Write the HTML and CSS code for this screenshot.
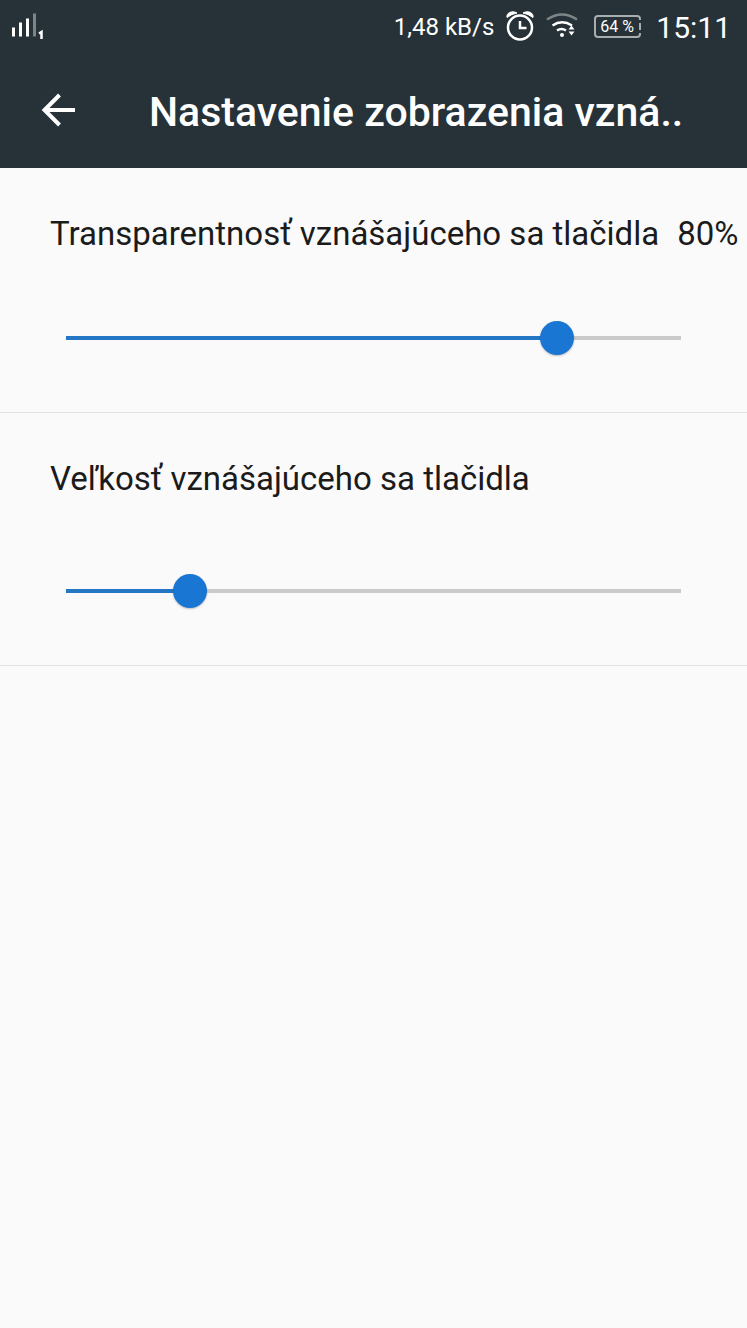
FILE: index.html
```html
<!DOCTYPE html>
<html lang="sk">
<head>
<meta charset="utf-8">
<meta name="viewport" content="width=device-width, initial-scale=1">
<title>Nastavenie zobrazenia</title>
<link rel="stylesheet" href="styles.css">
</head>
<body>
<header class="header">
  <div class="status">
    <svg class="signal" width="36" height="28" viewBox="0 0 36 28" aria-hidden="true">
      <g stroke="#fff" stroke-width="3" fill="none">
        <path d="M3.500 14.500v9M10.500 9.500v14M17.500 5.500v18"/>
        <path d="M24.500 0.500v23" stroke="#7d8587"/>
        <path d="M29 20.500l2.500-1.500v7" stroke-width="2.500"/>
      </g>
    </svg>
    <span class="speed">1,48 kB/s</span>
    <svg class="icon" width="28" height="32" viewBox="0 0 28 32" aria-hidden="true">
      <circle cx="14" cy="17.500" r="12" fill="none" stroke="#fff" stroke-width="2.500"/>
      <path d="M1 7.500C0 3 6 0 11 3Q5.500 4 1 7.500ZM27 7.500C28 3 22 0 17 3Q22.500 4 27 7.500Z" fill="#fff" stroke="#fff"/>
      <path d="M14 11v7h6.500" fill="none" stroke="#fff" stroke-width="2.500"/>
    </svg>
    <svg class="icon" width="32" height="26" viewBox="0 0 32 26" aria-hidden="true">
      <g fill="none" stroke-width="2.500">
        <path d="M1 6.500Q16-3.500 31 6.500" stroke="#7d8587"/>
        <path d="M6.500 12.500Q16 6 26 12.500M11 17.500Q15.500 14.500 20 17.500" stroke="#fff"/>
      </g>
      <circle cx="16" cy="22" r="2" fill="#fff"/>
      <path d="M22.500 16.500l3-4 3 4ZM22.500 18.500h6l-3 4Z" fill="#fff"/>
    </svg>
    <span class="battery">64 %</span>
    <time class="clock">15:11</time>
  </div>
  <div class="bar">
    <button class="back" type="button" aria-label="Späť">
      <svg width="34" height="34" viewBox="0 0 34 34" aria-hidden="true">
        <path d="M18.500 2L3.500 17 18.500 32M3.500 17H34" fill="none" stroke="#fff" stroke-width="4"/>
      </svg>
    </button>
    <h1 class="title">Nastavenie zobrazenia vzná..</h1>
  </div>
</header>
<main>
  <section class="setting">
    <div class="caption">
      <label for="opacity">Transparentnosť vznášajúceho sa tlačidla</label>
      <output for="opacity">80%</output>
    </div>
    <input class="slider slider-opacity" id="opacity" type="range" min="0" max="100" value="80">
  </section>
  <section class="setting setting-roomy">
    <div class="caption">
      <label for="size">Veľkosť vznášajúceho sa tlačidla</label>
    </div>
    <input class="slider slider-size" id="size" type="range" min="0" max="100" value="20">
  </section>
</main>
</body>
</html>
```

FILE: styles.css
```css
* { box-sizing: border-box; }

body {
  margin: 0;
  min-height: 100vh;
  background: #fafafa;
  color: #1b1b1b;
  font-family: Roboto, "Noto Sans", sans-serif;
}

.header {
  background: #263238;
  color: #fff;
}

.status {
  display: flex;
  align-items: center;
  height: 54px;
  padding: 0 16px 0 10px;
}

.signal { flex: none; }

.speed {
  margin-left: auto;
  font-size: 24px;
}

.icon {
  flex: none;
  margin: 0 0 2px 12px;
}

.battery {
  position: relative;
  width: 47px;
  height: 23px;
  margin: 0 0 2px 16px;
  padding-left: 4px;
  border: 2px solid #a8adaf;
  border-radius: 4px;
  font-size: 16px;
  line-height: 20px;
  white-space: nowrap;
}

/* dashed contact on the right edge of the battery */
.battery::after {
  content: "";
  position: absolute;
  top: 3px;
  right: -2px;
  width: 2px;
  height: 13px;
  background: linear-gradient(#263238 3px, #a8adaf 3px 10px, #263238 10px);
}

.clock {
  margin-left: 15px;
  font-size: 30px;
}

.bar {
  display: flex;
  align-items: center;
  height: 114px;
  padding: 2px 16px 0 33px;
}

.back {
  display: flex;
  flex: none;
  margin: 0 66px 4px 0;
  padding: 8px;
  border: 0;
  background: none;
}

.title {
  margin: 0;
  font-size: 41px;
  font-weight: 500;
  line-height: 48px;
  white-space: nowrap;
}

.setting {
  padding: 45px 50px 57px;
  border-bottom: 1px solid #e2e2e2;
}

.caption {
  display: flex;
  gap: 18px;
  margin-bottom: 67px;
  font-size: 33px;
  line-height: 41px;
  white-space: nowrap;
}

.setting-roomy .caption { margin-bottom: 75px; }

.slider {
  display: block;
  width: 100%;
  height: 34px;
  margin: 0;
  appearance: none;
  background:
    linear-gradient(#2377c4, #2377c4) 16px center / var(--fill) 4px no-repeat,
    linear-gradient(#cacaca, #cacaca) 16px center / calc(100% - 32px) 4px no-repeat;
}

.slider-opacity { --fill: calc((100% - 32px) * 0.8); }

.slider-size { --fill: calc((100% - 32px) * 0.2); }

.slider::-webkit-slider-thumb {
  appearance: none;
  width: 34px;
  height: 34px;
  border-radius: 50%;
  background: #1976d2;
  box-shadow: 0 1px 2px rgba(0, 0, 0, 0.25);
}

.slider::-moz-range-thumb {
  width: 34px;
  height: 34px;
  border: 0;
  border-radius: 50%;
  background: #1976d2;
}
```
